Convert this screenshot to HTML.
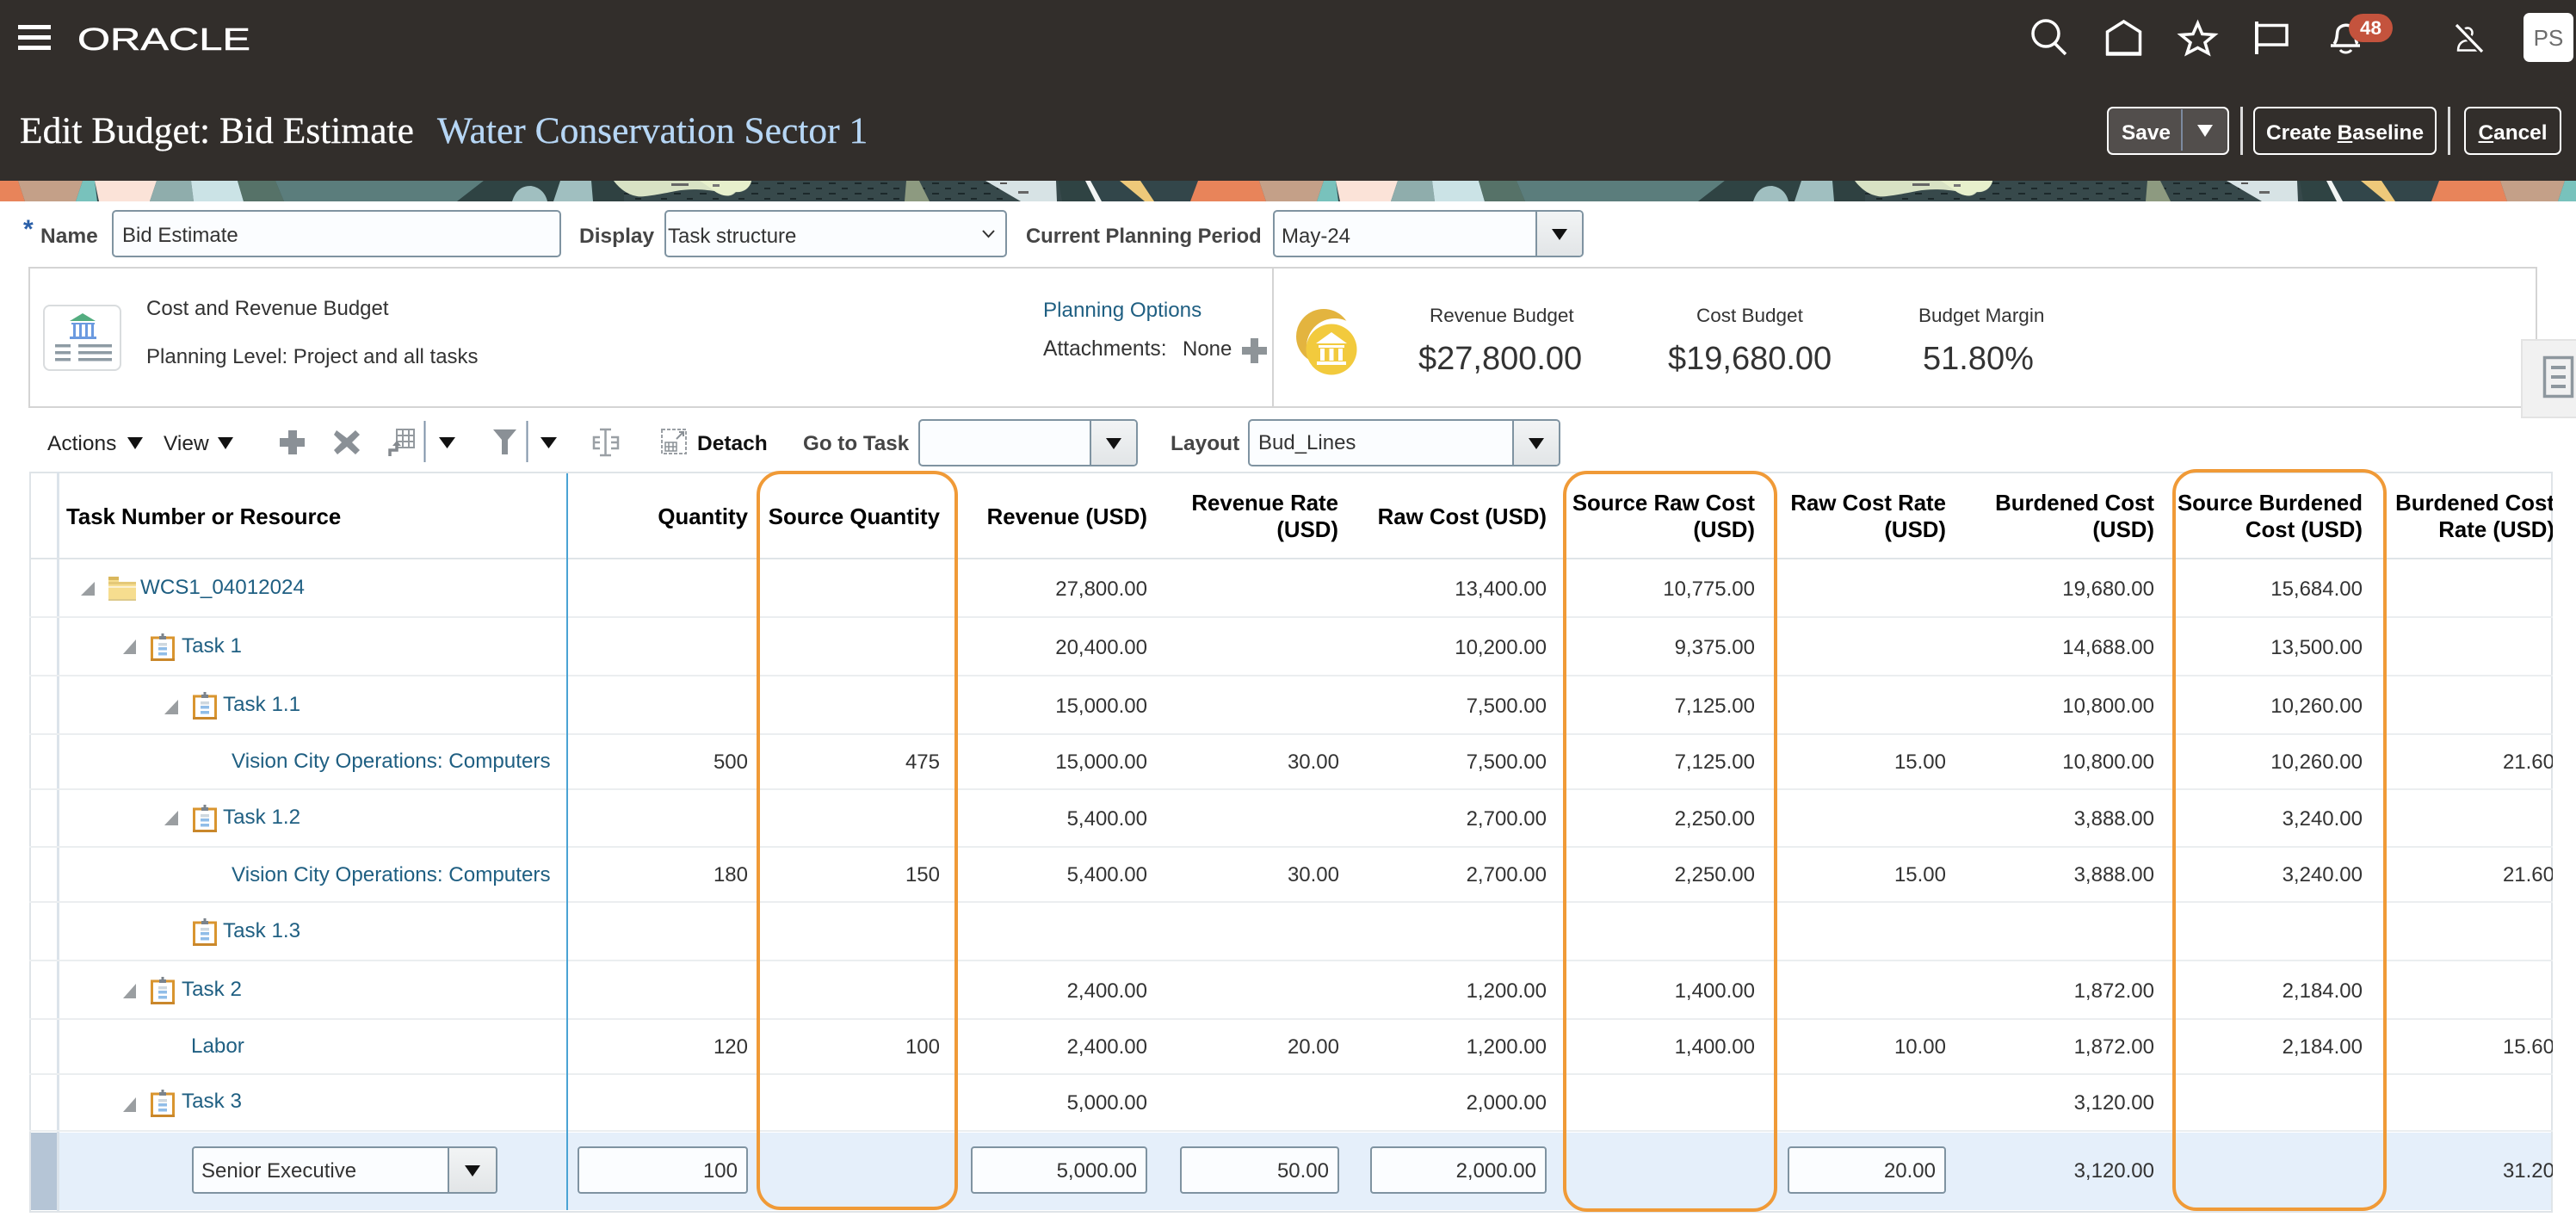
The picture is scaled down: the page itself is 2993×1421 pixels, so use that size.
<!DOCTYPE html>
<html lang="en"><head><meta charset="utf-8"><title>Edit Budget: Bid Estimate</title>
<style>
html,body{margin:0;padding:0;background:#fff}
body{position:relative;width:2993px;height:1421px;overflow:hidden;font-family:"Liberation Sans",sans-serif;font-size:24px;color:#333}
div,span{box-sizing:border-box}
.a{position:absolute;white-space:nowrap}
.t{position:absolute;white-space:nowrap;line-height:30px;height:30px}
.b{font-weight:bold}
.lb{font-weight:bold;color:#454545;font-size:24.5px}
.lk{color:#1f5f82;font-size:24.2px}
.inp{position:absolute;background:#fbfdff;border:2px solid #7f93a1;border-radius:5px}
.btn{position:absolute;top:0;bottom:0;right:0;width:68px;background:linear-gradient(#f2f4f5,#e2e5e7);border-left:2px solid #7f93a1;border-radius:0 3px 3px 0}
.btn i{position:absolute;left:50%;top:50%;margin:-6px 0 0 -9px;width:0;height:0;border-left:9px solid transparent;border-right:9px solid transparent;border-top:13px solid #111}
.hb{position:absolute;border:2.5px solid #fff;border-radius:7px;top:124px;height:56px;color:#fff;font-weight:bold;font-size:24.4px;line-height:58px;text-align:center}
.sp{position:absolute;top:124px;width:2.5px;height:56px;background:#d9d9d9}
.ln{position:absolute;left:34px;width:2932px;height:2px;background:#ebeef0}
.wrap{position:absolute;left:0;top:0;width:2966px;height:1421px;overflow:hidden}
.h{position:absolute;font-weight:bold;color:#000;font-size:25.8px;line-height:31px;text-align:right;white-space:nowrap}
.c1{right:2097px}.c2{right:1874px}.c3{right:1633px}.c4{right:1410px}.c5{right:1169px}.c6{right:927px}.c7{right:705px}.c8{right:463px}.c9{right:221px}.c10{right:-2px}
.v{position:absolute;background:#fbfdff;border:2px solid #7f93a1;border-radius:4px;top:1332px;height:55px;line-height:54px;text-align:right;padding-right:10px;font-size:24px;color:#333}
.lbl{font-size:24px;color:#333}
.ser{font:43.5px/48px 'Liberation Serif',serif;-webkit-text-stroke:.3px currentColor}
</style></head><body>

<div class="a" style="left:0;top:0;width:2993px;height:210px;background:#322e2b"></div>

<svg class="a" style="left:0;top:210px" width="2993" height="24" viewBox="0 0 2993 24">
<defs>
<pattern id="dts" width="30" height="12" patternUnits="userSpaceOnUse"><rect width="30" height="12" fill="#37494b"/><rect x="3" y="2" width="8" height="2" fill="#1c282a"/><rect x="18" y="8" width="7" height="2" fill="#1c282a"/></pattern>
<g id="bn">
<rect x="-60" y="0" width="1450" height="24" fill="#33464a"/>
<polygon points="-50,0 21,0 29,24 -59,24" fill="#e8845a"/>
<polygon points="21,0 96,0 88,24 29,24" fill="#c4a088"/>
<polygon points="96,0 110,0 113,24 88,24" fill="#78c2bc"/>
<polygon points="110,0 182,0 174,24 115,24" fill="#fbe3d8"/>
<polygon points="182,0 222,0 225,24 174,24" fill="#8fadac"/>
<polygon points="222,0 276,0 283,24 225,24" fill="#cbe3e6"/>
<polygon points="276,0 320,0 330,24 283,24" fill="#567268"/>
<polygon points="320,0 562,0 531,24 330,24" fill="#5b7d7c"/>
<polygon points="562,0 690,0 690,24 531,24" fill="#2f4343"/>
<path d="M595 24C599 12 605 6 617 6C629 8 634 16 636 24Z" fill="#a0bfc0"/>
<polygon points="651,0 687,0 689,24 643,24" fill="#a0bfc0"/>
<rect x="689" y="0" width="190" height="24" fill="#2f4141"/>
<rect x="725" y="0" width="510" height="24" fill="url(#dts)"/>
<path d="M713 0H873C871 10 862 14 855 13C848 21 838 17 830 12C818 10 800 9 785 12C775 14 745 20 740 18C728 16 719 8 713 0Z" fill="#d8e2c4"/>
<path d="M813 0H873C872 9 860 14 853 13C847 20 836 17 829 11Z" fill="#e7f0cc"/>
<rect x="780" y="3" width="20" height="3" fill="#666"/><rect x="828" y="4" width="8" height="3" fill="#777"/>
<polygon points="1053,0 1068,0 1080,24 1051,24" fill="#8d9a80"/>
<polygon points="1145,0 1227,0 1228,24 1186,24" fill="#d7e3e5"/>
<rect x="1162" y="2" width="8" height="2" fill="#555"/><rect x="1183" y="12" width="12" height="3" fill="#666"/>
<polygon points="1230,0 1262,0 1290,24 1234,24" fill="#2f4343"/>
<polygon points="1267,0 1301,0 1330,24 1280,24" fill="#32464a"/>
<polygon points="1261,0 1267,0 1280,24 1273,24" fill="#f2f5f4"/>
<polygon points="1301,0 1325,0 1341,24 1330,24" fill="#eec97a"/>
</g></defs>
<use href="#bn"/><use href="#bn" x="1442"/><use href="#bn" x="2884"/>
</svg>

<svg class="a" style="left:0;top:0" width="320" height="80" viewBox="0 0 320 80">
<rect x="21" y="29" width="38" height="5" fill="#fff"/><rect x="21" y="41" width="38" height="5" fill="#fff"/><rect x="21" y="53" width="38" height="5" fill="#fff"/>
<text x="90" y="58" font-family="Liberation Sans" font-size="36" fill="#fff" stroke="#fff" stroke-width=".5" textLength="201" lengthAdjust="spacingAndGlyphs">ORACLE</text>
</svg>

<div class="a ser" style="left:23px;top:128px;color:#fff">Edit Budget: Bid Estimate</div>
<div class="a ser" style="left:508px;top:128px;color:#b6d6f5">Water Conservation Sector 1</div>

<div class="hb" style="left:2448px;width:142px;background:#524e4c;text-align:left;padding-left:15px">Save</div>
<div class="a" style="left:2534px;top:127px;width:2px;height:48px;background:#7c8aa0"></div>
<div class="a" style="left:2553px;top:145px;width:0;height:0;border-left:9px solid transparent;border-right:9px solid transparent;border-top:14px solid #fff"></div>
<div class="sp" style="left:2603px"></div>
<div class="hb" style="left:2618px;width:213px">Create <u>B</u>aseline</div>
<div class="sp" style="left:2844px"></div>
<div class="hb" style="left:2863px;width:113px"><u>C</u>ancel</div>

<div class="a" style="left:2932px;top:15px;width:58px;height:57px;background:#fff;border-radius:7px;color:#6d6d6d;font-size:26px;line-height:58px;text-align:center">PS</div>

<div class="a" style="left:2729px;top:16px;width:51px;height:33px;border-radius:17px;background:#c4533d;color:#fff;font-weight:bold;font-size:22.5px;line-height:34px;text-align:center;z-index:2">48</div>

<!-- form row -->
<div class="a" style="left:27px;top:252px;color:#2a5fa8;font-size:30px;font-weight:bold;line-height:30px">*</div>
<div class="t lb" style="left:47px;top:260px">Name</div>
<div class="inp" style="left:130px;top:244px;width:522px;height:55px"></div>
<div class="t" style="left:142px;top:259px">Bid Estimate</div>
<div class="t lb" style="left:673px;top:260px">Display</div>
<div class="inp" style="left:772px;top:244px;width:398px;height:55px"></div>
<div class="t" style="left:776px;top:260px">Task structure</div>
<svg class="a" style="left:1140px;top:266px" width="20" height="12"><path d="M2 2L8.500 9L15 2" fill="none" stroke="#333" stroke-width="2"/></svg>
<div class="t lb" style="left:1192px;top:260px;font-size:23.8px">Current Planning Period</div>
<div class="inp" style="left:1479px;top:244px;width:361px;height:55px"><div class="btn" style="width:54px"><i></i></div></div>
<div class="t" style="left:1489px;top:260px">May-24</div>

<!-- summary panel -->
<div class="a" style="left:33px;top:310px;width:2915px;height:164px;border:2px solid #d4d4d4"></div>
<div class="a" style="left:1478px;top:312px;width:2px;height:160px;background:#d4d4d4"></div>
<div class="t lbl" style="left:170px;top:344px">Cost and Revenue Budget</div>
<div class="t lbl" style="left:170px;top:400px">Planning Level: Project and all tasks</div>
<div class="t lk" style="left:1212px;top:346px;font-size:24.2px">Planning Options</div>
<div class="t lbl" style="left:1212px;top:391px;font-size:24.6px">Attachments:</div>
<div class="t lbl" style="left:1374px;top:391px">None</div>
<div class="t" style="left:1661px;top:352px;font-size:22.5px;color:#333">Revenue Budget</div>
<div class="t" style="left:1971px;top:352px;font-size:22.5px;color:#333">Cost Budget</div>
<div class="t" style="left:2229px;top:352px;font-size:22.5px;color:#333">Budget Margin</div>
<div class="a" style="left:1648px;top:395px;font-size:38px;line-height:44px;color:#333">$27,800.00</div>
<div class="a" style="left:1938px;top:395px;font-size:38px;line-height:44px;color:#333">$19,680.00</div>
<div class="a" style="left:2234px;top:395px;font-size:38px;line-height:44px;color:#333">51.80%</div>

<div class="a" style="left:2929px;top:394px;width:64px;height:92px;background:#f1f1f1;border:2px solid #e3e3e3;border-right:0"></div>

<!-- toolbar -->
<div class="t" style="left:55px;top:501px;font-size:24.5px;color:#222">Actions</div>
<div class="t" style="left:190px;top:501px;font-size:24.5px;color:#222">View</div>
<div class="t b" style="left:810px;top:501px;font-size:24.5px;color:#111">Detach</div>
<div class="t lb" style="left:933px;top:501px;font-size:24.2px">Go to Task</div>
<div class="inp" style="left:1067px;top:487px;width:255px;height:55px"><div class="btn" style="width:54px"><i></i></div></div>
<div class="t lb" style="left:1360px;top:501px">Layout</div>
<div class="inp" style="left:1450px;top:487px;width:363px;height:55px"><div class="btn" style="width:54px"><i></i></div></div>
<div class="t" style="left:1462px;top:500px">Bud_Lines</div>

<!-- table frame -->
<div class="wrap">
<div class="a" style="left:34px;top:1316px;width:2932px;height:90px;background:#e5effa"></div>
<div class="a" style="left:36px;top:1316px;width:30px;height:90px;background:#b5c5d6"></div>

<div class="a" style="left:34px;top:548px;width:2932px;height:2px;background:#dfe4e8"></div>
<div class="a" style="left:34px;top:548px;width:2px;height:861px;background:#dfe4e8"></div>
<div class="a" style="left:66px;top:548px;width:2.5px;height:861px;background:#dbe3ea"></div>
<div class="a" style="left:2964px;top:548px;width:2px;height:861px;background:#dfe4e8"></div>
<div class="ln" style="top:648px;background:#dfe4e8"></div>
<div class="ln" style="top:716px"></div>
<div class="ln" style="top:784px"></div>
<div class="ln" style="top:852px"></div>
<div class="ln" style="top:916px"></div>
<div class="ln" style="top:983px"></div>
<div class="ln" style="top:1047px"></div>
<div class="ln" style="top:1115px"></div>
<div class="ln" style="top:1183px"></div>
<div class="ln" style="top:1247px"></div>
<div class="ln" style="top:1313px"></div>
<div class="ln" style="top:1407px;background:#dfe4e8"></div>
<div class="a" style="left:658px;top:550px;width:2px;height:856px;background:#4aa3d4"></div>

<!-- headers -->
<div class="h" style="left:77px;top:586px;text-align:left">Task Number or Resource</div>
<div class="h c1" style="top:586px">Quantity</div>
<div class="h c2" style="top:586px">Source Quantity</div>
<div class="h c3" style="top:586px">Revenue (USD)</div>
<div class="h" style="right:1411px;top:570px">Revenue Rate<br>(USD)</div>
<div class="h c5" style="top:586px">Raw Cost (USD)</div>
<div class="h c6" style="top:570px">Source Raw Cost<br>(USD)</div>
<div class="h c7" style="top:570px">Raw Cost Rate<br>(USD)</div>
<div class="h c8" style="top:570px">Burdened Cost<br>(USD)</div>
<div class="h c9" style="top:570px">Source Burdened<br>Cost (USD)</div>
<div class="h" style="right:-2px;top:570px">Burdened Cost<br>Rate (USD)</div>

<!-- row 0 -->
<div class="t lk" style="left:163px;top:668px">WCS1_04012024</div>
<div class="t c3" style="top:670px">27,800.00</div><div class="t c5" style="top:670px">13,400.00</div><div class="t c6" style="top:670px">10,775.00</div><div class="t c8" style="top:670px">19,680.00</div><div class="t c9" style="top:670px">15,684.00</div>
<!-- row 1 -->
<div class="t lk" style="left:211px;top:736px">Task 1</div>
<div class="t c3" style="top:738px">20,400.00</div><div class="t c5" style="top:738px">10,200.00</div><div class="t c6" style="top:738px">9,375.00</div><div class="t c8" style="top:738px">14,688.00</div><div class="t c9" style="top:738px">13,500.00</div>
<!-- row 2 -->
<div class="t lk" style="left:259px;top:804px">Task 1.1</div>
<div class="t c3" style="top:806px">15,000.00</div><div class="t c5" style="top:806px">7,500.00</div><div class="t c6" style="top:806px">7,125.00</div><div class="t c8" style="top:806px">10,800.00</div><div class="t c9" style="top:806px">10,260.00</div>
<!-- row 3 -->
<div class="t lk" style="left:269px;top:870px">Vision City Operations: Computers</div>
<div class="t c1" style="top:871px">500</div><div class="t c2" style="top:871px">475</div><div class="t c3" style="top:871px">15,000.00</div><div class="t c4" style="top:871px">30.00</div><div class="t c5" style="top:871px">7,500.00</div><div class="t c6" style="top:871px">7,125.00</div><div class="t c7" style="top:871px">15.00</div><div class="t c8" style="top:871px">10,800.00</div><div class="t c9" style="top:871px">10,260.00</div><div class="t c10" style="top:871px">21.60</div>
<!-- row 4 -->
<div class="t lk" style="left:259px;top:935px">Task 1.2</div>
<div class="t c3" style="top:937px">5,400.00</div><div class="t c5" style="top:937px">2,700.00</div><div class="t c6" style="top:937px">2,250.00</div><div class="t c8" style="top:937px">3,888.00</div><div class="t c9" style="top:937px">3,240.00</div>
<!-- row 5 -->
<div class="t lk" style="left:269px;top:1002px">Vision City Operations: Computers</div>
<div class="t c1" style="top:1002px">180</div><div class="t c2" style="top:1002px">150</div><div class="t c3" style="top:1002px">5,400.00</div><div class="t c4" style="top:1002px">30.00</div><div class="t c5" style="top:1002px">2,700.00</div><div class="t c6" style="top:1002px">2,250.00</div><div class="t c7" style="top:1002px">15.00</div><div class="t c8" style="top:1002px">3,888.00</div><div class="t c9" style="top:1002px">3,240.00</div><div class="t c10" style="top:1002px">21.60</div>
<!-- row 6 -->
<div class="t lk" style="left:259px;top:1067px">Task 1.3</div>
<!-- row 7 -->
<div class="t lk" style="left:211px;top:1135px">Task 2</div>
<div class="t c3" style="top:1137px">2,400.00</div><div class="t c5" style="top:1137px">1,200.00</div><div class="t c6" style="top:1137px">1,400.00</div><div class="t c8" style="top:1137px">1,872.00</div><div class="t c9" style="top:1137px">2,184.00</div>
<!-- row 8 -->
<div class="t lk" style="left:222px;top:1201px">Labor</div>
<div class="t c1" style="top:1202px">120</div><div class="t c2" style="top:1202px">100</div><div class="t c3" style="top:1202px">2,400.00</div><div class="t c4" style="top:1202px">20.00</div><div class="t c5" style="top:1202px">1,200.00</div><div class="t c6" style="top:1202px">1,400.00</div><div class="t c7" style="top:1202px">10.00</div><div class="t c8" style="top:1202px">1,872.00</div><div class="t c9" style="top:1202px">2,184.00</div><div class="t c10" style="top:1202px">15.60</div>
<!-- row 9 -->
<div class="t lk" style="left:211px;top:1265px">Task 3</div>
<div class="t c3" style="top:1267px">5,000.00</div><div class="t c5" style="top:1267px">2,000.00</div><div class="t c8" style="top:1267px">3,120.00</div>
<!-- row 10 -->
<div class="v" style="left:223px;width:355px;text-align:left;padding-left:9px">Senior Executive<div class="btn" style="width:56px"><i></i></div></div>
<div class="v" style="left:671px;width:198px">100</div>
<div class="v" style="left:1128px;width:205px">5,000.00</div>
<div class="v" style="left:1371px;width:185px">50.00</div>
<div class="v" style="left:1592px;width:205px">2,000.00</div>
<div class="v" style="left:2077px;width:184px">20.00</div>
<div class="t c8" style="top:1346px">3,120.00</div>
<div class="t c10" style="top:1346px">31.20</div>
</div>

<!-- icon overlay -->
<svg class="a" style="left:0;top:0;z-index:1" width="2993" height="1421" viewBox="0 0 2993 1421">
<defs>
<g id="clip"><rect x="1.500" y="5" width="25" height="25.500" fill="#fff" stroke="#d9952f" stroke-width="3"/><path d="M0 29H28V32H0Z" fill="#c9872b"/><path d="M10 6V3H12.500V0H15.500V3H18V7H10Z" fill="#7b838b"/><rect x="9" y="11" width="10" height="3.500" fill="#cfd8df"/><rect x="9" y="16" width="10" height="3.500" fill="#90bde8"/><rect x="9" y="22" width="10" height="3.500" fill="#90bde8"/></g>
</defs>

<!-- top icons -->
<g fill="none" stroke="#fff" stroke-width="3.500">
<circle cx="2377" cy="39" r="15"/><path d="M2388 51L2400 63"/>
<path d="M2448.500 37L2467.500 25L2486.500 37V62.500H2448.500Z"/><path d="M2447 62.500H2488" stroke-width="4.500"/>
<path d="M2553.500 27L2558.700 39.500L2573 40.500L2562 49.500L2565.800 62L2553.500 55.500L2541 62L2545 49.500L2534 40.500L2548 39.500Z"/>
<path d="M2622 25V63" stroke-width="4"/><path d="M2622 29.500H2657V52H2622" stroke-width="3.500"/>
<path d="M2712 51C2716 46 2715 40 2716 36C2718 28 2732 26 2736 36C2738 41 2736 47 2739 51M2708 53H2742"/>
<path d="M2719 58C2722 62 2729 62 2732 58" stroke-width="3"/>
<circle cx="2867" cy="38" r="5.500" stroke-width="2.500"/><path d="M2856 58.500C2856 51 2861 47 2867 47C2874 47 2880 52 2880 58.500Z" stroke-width="2.500"/>
</g>
<path d="M2855 29.500L2883 59" stroke="#322e2b" stroke-width="8"/>
<path d="M2854 29L2884 60" stroke="#fff" stroke-width="3.200"/>

<!-- budget icon -->
<rect x="51" y="355" width="89" height="75" rx="7" fill="#fff" stroke="#d9dcde" stroke-width="2"/>
<polygon points="96,364 111,373 81,373" fill="#53ad80"/>
<path d="M83 375H110V377H83ZM85 377H88V391H85ZM92 377H95V391H92ZM99 377H102V391H99ZM106 377H109V391H106ZM81 391H112V394H81Z" fill="#6b9ae0"/>
<g fill="#8e9ba4"><rect x="64" y="400" width="18" height="3.500"/><rect x="91" y="400" width="39" height="3.500"/><rect x="64" y="408" width="18" height="3.500"/><rect x="91" y="408" width="39" height="3.500"/><rect x="64" y="416" width="18" height="3.500"/><rect x="91" y="416" width="39" height="3.500"/></g>

<!-- coin icon -->
<circle cx="1538" cy="391" r="32" fill="#e3b43f"/>
<circle cx="1551" cy="403" r="33" fill="#fff"/>
<circle cx="1547" cy="406" r="29.500" fill="#f2ca3d"/>
<path d="M1547 386L1565 399H1529ZM1532 401H1562V404H1532ZM1534 405H1539V419H1534ZM1544.500 405H1549.500V419H1544.500ZM1555 405H1560V419H1555ZM1530 420H1564V424H1530Z" fill="#fff"/>

<!-- attachment plus -->
<path d="M1443 403H1453V393H1462V403H1472V412H1462V422H1453V412H1443Z" fill="#8e9498"/>

<!-- tab icon -->
<rect x="2956.500" y="415.500" width="32" height="45" fill="none" stroke="#8e979e" stroke-width="3.500"/>
<g fill="#8e979e"><rect x="2964" y="425" width="17" height="4"/><rect x="2964" y="436" width="17" height="4"/><rect x="2964" y="447" width="17" height="4"/></g>

<!-- toolbar icons -->
<g fill="#111"><polygon points="148,508 166,508 157,522"/><polygon points="253,508 271,508 262,522"/><polygon points="510,508 529,508 519.500,521"/><polygon points="628,508 647,508 637.500,521"/></g>
<path d="M325 509H335V500H345V509H354V519H345V528H335V519H325Z" fill="#8a9096"/>
<path d="M391 500L403 509L413 500L418 505L409 514L418 523L413 528L403 519L392 528L388 523L397 514L388 505Z" fill="#8a9096"/>
<g fill="none" stroke="#949a9f" stroke-width="2"><rect x="461" y="499" width="20" height="21"/><path d="M461 506H481M461 513H481M468 499V520M475 499V520"/></g>
<path d="M453 530V523H461V517" fill="none" stroke="#84898e" stroke-width="3.500"/><path d="M456 518L461 512L466 518Z" fill="#84898e"/>
<rect x="492.500" y="489" width="2" height="48" fill="#7f93a8"/>
<path d="M573 499H600L590 511V528H583V511Z" fill="#8a9096"/>
<rect x="611.500" y="489" width="2" height="48" fill="#7f93a8"/>
<g fill="none" stroke="#9aa0a5" stroke-width="2.500"><path d="M697 499H710M703.500 499V529M697 529H710"/><path d="M697 508H690V514H697M690 514V521H697M710 508H718V514H710M718 514V521H710"/></g>
<g fill="none" stroke="#9a9fa4" stroke-width="2" stroke-dasharray="4 2"><rect x="769" y="499" width="28" height="28"/></g>
<g fill="none" stroke="#8a9096" stroke-width="1.500"><rect x="773" y="514" width="13" height="10"/><path d="M773 519H786M777 514V524M782 514V524"/><path d="M786 510L794 502M789 502H794V507" stroke-width="2"/></g>

<!-- tree triangles -->
<g fill="#9a9ea1"><polygon points="110,676 110,692 94,692"/><polygon points="158,743 158,760 143,760"/><polygon points="207,813 207,830 191,830"/><polygon points="207,942 207,959 191,959"/><polygon points="158,1143 158,1160 143,1160"/><polygon points="158,1275 158,1292 143,1292"/></g>

<!-- folder -->
<path d="M126 670H138V676H158V698H126Z" fill="#f6dd8f"/><path d="M126 670H138V674H126Z" fill="#d9b75c"/><path d="M126 676H158V679H126Z" fill="#e4c878"/><path d="M126 681H158V683H126Z" fill="#fff" opacity=".6"/><rect x="126" y="696" width="32" height="2" fill="#dcc98a"/>

<!-- task clipboards -->
<use href="#clip" x="175" y="736"/><use href="#clip" x="224" y="804"/><use href="#clip" x="224" y="935"/><use href="#clip" x="224" y="1067"/><use href="#clip" x="175" y="1135"/><use href="#clip" x="175" y="1266"/>

<!-- orange highlight boxes -->
<g fill="none" stroke="#f09a37" stroke-width="4">
<rect x="881" y="549" width="230" height="855" rx="26"/>
<rect x="1818" y="549" width="245" height="857" rx="26"/>
<rect x="2526" y="547" width="245" height="858" rx="26"/>
</g>
</svg>
</body></html>
